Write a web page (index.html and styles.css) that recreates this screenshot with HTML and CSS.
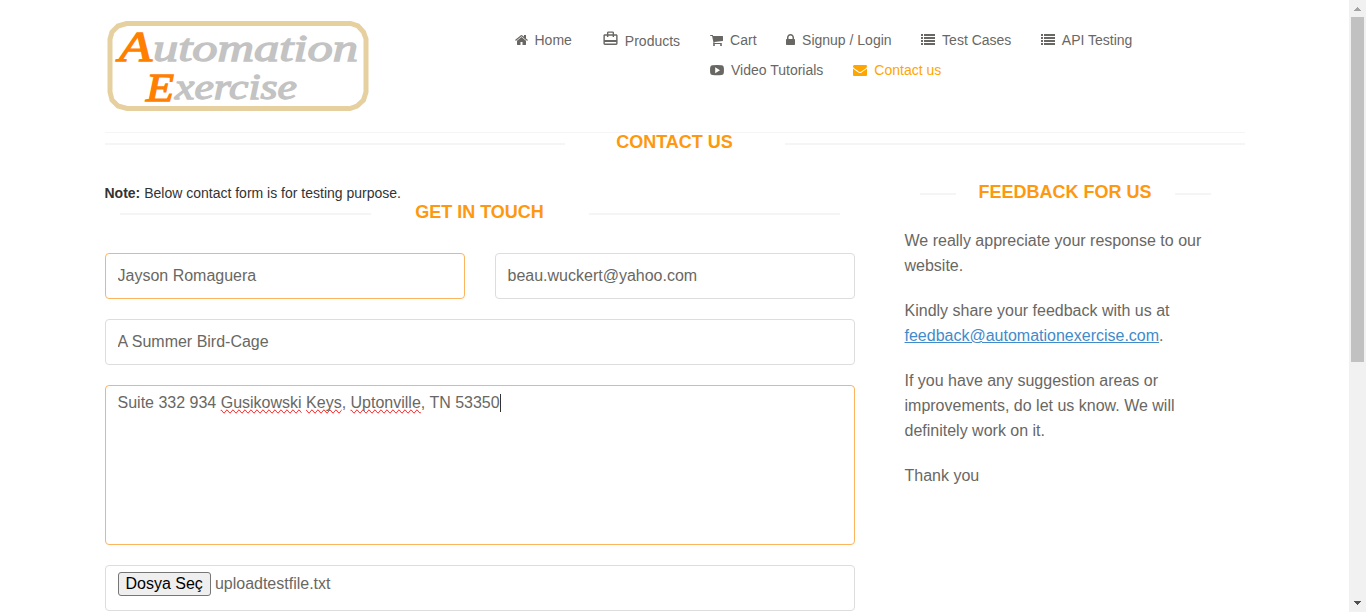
FILE: index.html
```html
<!DOCTYPE html>
<html lang="en">
<head>
<meta charset="utf-8">
<title>Automation Exercise - Contact Us</title>
<link rel="stylesheet" href="styles.css">
</head>
<body>
<div class="page">
  <header class="header">
    <svg class="logo" width="262" height="92" viewBox="0 0 262 92">
      <path class="logo-frame" d="M19.500 3.500H243.500L251 6L256.500 12L259 19V72L256.500 80L250 86L243 88.500H20L11 86L5 80L3 72V19L5 12L11 6Z"/>
      <text class="logo-cap" x="12" y="41" font-size="42" textLength="33" lengthAdjust="spacingAndGlyphs">A</text>
      <text class="logo-rest" x="46" y="41" font-size="37" textLength="205" lengthAdjust="spacingAndGlyphs">utomation</text>
      <text class="logo-cap" x="39" y="81" font-size="41" textLength="28" lengthAdjust="spacingAndGlyphs">E</text>
      <text class="logo-rest" x="68" y="79" font-size="36" textLength="122" lengthAdjust="spacingAndGlyphs">xercise</text>
    </svg>
    <nav class="nav">
      <div class="nav-row">
        <a class="nav-item home"><svg width="13" height="14" viewBox="64 0 1664 1792"><path d="M1472 992v480q0 26-19 45t-45 19h-384v-384h-256v384h-384q-26 0-45-19t-19-45v-480q0-1 .5-3t.5-3l575-474 575 474q1 2 1 6zm223-69l-62 74q-8 9-21 11h-3q-13 0-21-7l-692-577-692 577q-12 8-24 7-13-2-21-11l-62-74q-8-10-7-23.500t11-21.500l719-599q32-26 76-26t76 26l244 204v-195q0-14 9-23t23-9h192q14 0 23 9t9 23v408l219 182q10 8 11 21.500t-7 23.500z"/></svg>Home</a>
        <a class="nav-item products"><svg width="17" height="17" viewBox="0 0 24 24"><path d="M20 6h-3V4c0-1.110-.89-2-2-2H9c-1.110 0-2 .89-2 2v2H4c-1.110 0-2 .89-2 2v11c0 1.110.89 2 2 2h16c1.110 0 2-.89 2-2V8c0-1.110-.89-2-2-2zM9 4h6v2H9V4zm11 15H4v-2h16v2zm0-5H4V8h3v2h2V8h6v2h2V8h3v6z"/></svg>Products</a>
        <a class="nav-item"><svg width="13" height="14" viewBox="64 0 1664 1792"><path d="M704 1536q0 52-38 90t-90 38-90-38-38-90 38-90 90-38 90 38 38 90zm896 0q0 52-38 90t-90 38-90-38-38-90 38-90 90-38 90 38 38 90zm128-1088v512q0 24-16.500 42.500t-40.500 21.500l-1044 122q13 60 13 70 0 16-24 64h920q26 0 45 19t19 45-19 45-45 19h-1024q-26 0-45-19t-19-45q0-11 8-31.500t16-36 21.500-40 15.500-29.500l-177-823h-204q-26 0-45-19t-19-45 19-45 45-19h256q16 0 28.500 6.500t19.500 15.500 13 24.500 8 26 5.500 29.500 4.500 26h1201q26 0 45 19t19 45z"/></svg>Cart</a>
        <a class="nav-item"><svg width="9" height="14" viewBox="320 0 1152 1792"><path d="M640 768h512v-192q0-106-75-181t-181-75-181 75-75 181v192zm832 96v576q0 40-28 68t-68 28h-960q-40 0-68-28t-28-68v-576q0-40 28-68t68-28h32v-192q0-184 132-316t316-132 316 132 132 316v192h32q40 0 68 28t28 68z"/></svg>Signup / Login</a>
        <a class="nav-item"><svg width="14" height="14" viewBox="0 0 14 14"><path d="M0 1h2v2H0zM3 1h11v2H3zM0 4h2v2H0zM3 4h11v2H3zM0 7h2v2H0zM3 7h11v2H3zM0 10h2v2H0zM3 10h11v2H3z"/></svg>Test Cases</a>
        <a class="nav-item"><svg width="14" height="14" viewBox="0 0 14 14"><path d="M0 1h2v2H0zM3 1h11v2H3zM0 4h2v2H0zM3 4h11v2H3zM0 7h2v2H0zM3 7h11v2H3zM0 10h2v2H0zM3 10h11v2H3z"/></svg>API Testing</a>
      </div>
      <div class="nav-row second">
        <a class="nav-item"><svg width="14" height="14" viewBox="0 0 14 14"><path fill-rule="evenodd" d="M2.500 2.200Q7 1.800 11.500 2.200Q13.600 2.300 13.800 4.500Q14.100 7.200 13.800 10Q13.600 12 11.500 12.100Q7 12.500 2.500 12.100Q.4 12 .2 10Q-.1 7.200 .2 4.500Q.4 2.300 2.500 2.200ZM5.200 4.200V10.200L10 7.200Z"/></svg>Video Tutorials</a>
        <a class="nav-item active"><svg width="14" height="14" viewBox="0 0 1792 1792"><path d="M1792 710v794q0 66-47 113t-113 47h-1472q-66 0-113-47t-47-113v-794q44 49 101 87 362 246 497 345 57 42 92.500 65.500t94.500 48 110 24.500h2q51 0 110-24.500t94.500-48 92.500-65.500q170-123 498-345 57-39 100-87zm0-294q0 79-49 151t-122 123q-376 261-468 325-10 7-42.500 31t-54 38.500-52 32.500-57.500 27-50 9h-2q-23 0-50-9t-57.500-27-52-32.500-54-38.500-42.500-31q-91-64-262-182.500t-205-142.500q-62-42-117-115.500t-55-136.500q0-78 41.500-130t118.500-52h1472q65 0 112.500 47t47.500 113z"/></svg>Contact us</a>
      </div>
    </nav>
  </header>
  <main class="main">
    <h2 class="title title-main"><span>Contact Us</span></h2>
    <div class="columns">
      <section class="contact">
        <div class="note"><b>Note:</b> Below contact form is for testing purpose.</div>
        <h2 class="title title-touch"><span>Get In Touch</span></h2>
        <form class="form">
          <div class="pair">
            <input class="field focus" type="text" value="Jayson Romaguera">
            <input class="field" type="text" value="beau.wuckert@yahoo.com">
          </div>
          <input class="field" type="text" value="A Summer Bird-Cage">
          <div class="field message focus">Suite 332 934 <span class="typo">Gusikowski</span> <span class="typo">Keys</span>, <span class="typo">Uptonville</span>, TN 53350<i class="caret"></i></div>
          <div class="field file"><span class="choose">Dosya Seç</span><span class="filename">uploadtestfile.txt</span></div>
        </form>
      </section>
      <aside class="feedback">
        <h2 class="title title-feedback"><span>Feedback For Us</span></h2>
        <p>We really appreciate your response to our website.</p>
        <p>Kindly share your feedback with us at <a class="mail">feedback@automationexercise.com</a>.</p>
        <p>If you have any suggestion areas or improvements, do let us know. We will definitely work on it.</p>
        <p>Thank you</p>
      </aside>
    </div>
  </main>
</div>
<div class="scrollbar">
  <svg width="17" height="17" viewBox="0 0 17 17" shape-rendering="crispEdges"><path fill="#a3a3a3" d="M8 7h1v1h1v1h1v1h1v1H5v-1h1V9h1V8h1z"/></svg>
  <div class="thumb"></div>
  <svg class="down" width="17" height="17" viewBox="0 0 17 17" shape-rendering="crispEdges"><path fill="#505050" d="M5 6h7v1h-1v1h-1v1H9v1H8V9H7V8H6V7H5z"/></svg>
</div>
</body>
</html>
```
FILE: styles.css
```css
* { box-sizing: border-box; }
body {
  margin: 0;
  height: 612px;
  display: flex;
  overflow: hidden;
  background: #fff;
  color: #696763;
  font: 14px/20px "Liberation Sans", Arial, sans-serif;
}
.page { width: 1349px; height: 612px; padding-left: 104.5px; overflow: hidden; }
.header { display: flex; width: 1140px; height: 133px; padding-top: 20px; border-bottom: 1px solid #f5f5f5; }
.logo { flex: none; margin-left: 2.5px; }
.logo-frame { fill: none; stroke: #e6d0a0; stroke-width: 5; }
.logo text { font-family: "Liberation Serif", serif; font-style: italic; font-weight: 400; stroke-width: 1.3; }
.logo-cap { fill: #ff8000; stroke: #ff8000; }
.logo-rest { fill: #c3c3c3; stroke: #c3c3c3; }
.nav { margin: 10px 0 0 145.5px; }
.nav-row { display: flex; gap: 29.5px; height: 30px; }
.nav-row.second { margin-left: 195.5px; gap: 30px; }
.nav-item { display: flex; align-items: center; gap: 7px; height: 20px; white-space: nowrap; }
.nav-item svg { fill: currentColor; flex: none; }
.home { margin-left: 0.5px; gap: 6.5px; }
.products { height: 22px; gap: 6px; margin: 0 0.5px; }
.products svg { margin-bottom: 5px; }
.active { color: #ffa500; }
.main { width: 1140px; }
.title {
  display: flex;
  align-items: center;
  margin: 0;
  height: 20px;
  color: #fe980f;
  font-size: 18px;
  line-height: 20px;
  font-weight: 700;
  text-transform: uppercase;
}
.title span { flex: 1; padding-bottom: 2px; text-align: center; white-space: nowrap; }
.title::before, .title::after { content: ""; height: 2px; margin-top: 2px; background: #f5f5f5; }
.title-main::before, .title-main::after { width: 460px; }
.title-touch { padding: 0 15px; }
.title-touch::before, .title-touch::after { width: 251px; }
.title-feedback { margin: 0 34px 25px 15px; }
.title-feedback::before, .title-feedback::after { width: 36px; }
.columns { display: flex; gap: 50px; margin-top: 30px; }
.contact { width: 750px; }
.note { color: #333; height: 20px; }
.form { display: flex; flex-direction: column; gap: 20px; margin-top: 30px; }
.pair { display: flex; gap: 30px; }
.field {
  width: 100%;
  height: 46px;
  padding: 6px 12px;
  border: 1px solid #ddd;
  border-radius: 4px;
  background: #fff;
  color: #696763;
  font: 16px/22px "Liberation Sans", Arial, sans-serif;
  outline: none;
}
.field.focus { border-color: #fdb45e; }
.message { height: 160px; }
.typo { text-decoration: spelling-error; }
.caret { display: inline-block; width: 1px; height: 18px; background: #333; vertical-align: -4px; }
.file { display: flex; align-items: flex-start; gap: 4px; }
.choose { height: 24px; padding: 0 7px; border: 1px solid #767676; border-radius: 3px; background: #efefef; color: #000; }
.filename { padding-top: 1px; }
.feedback { width: 340px; font-size: 16px; line-height: 25px; }
.feedback p { width: 310px; margin: 0 0 20px; }
.mail { color: #428bca; text-decoration: underline; }
.scrollbar { width: 17px; height: 612px; display: flex; flex-direction: column; background: #f1f1f1; }
.thumb { width: 13px; height: 345px; margin-left: 2px; background: #c1c1c1; }
.down { margin-top: auto; }
```
